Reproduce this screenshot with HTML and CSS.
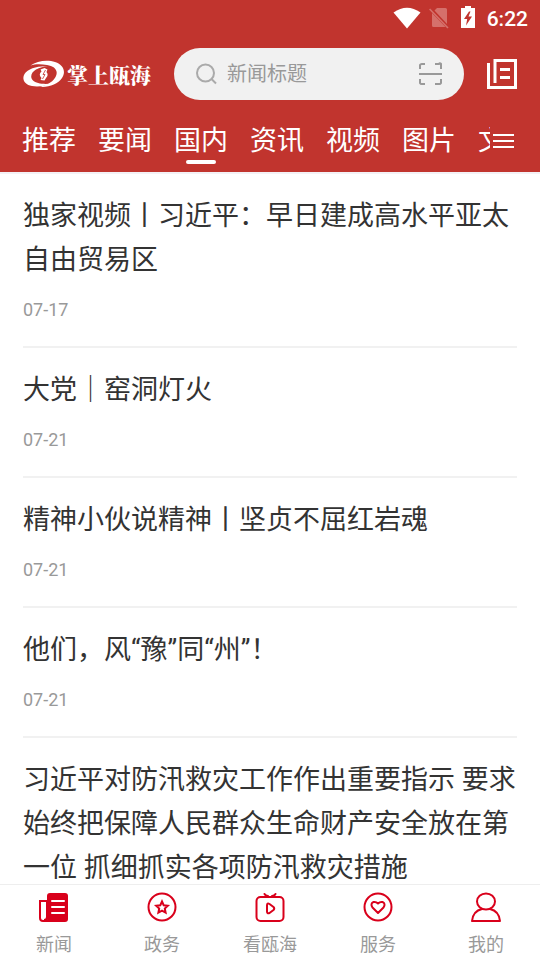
FILE: index.html
```html
<!DOCTYPE html>
<html lang="zh-CN">
<head>
<meta charset="utf-8">
<meta name="viewport" content="width=device-width, initial-scale=1">
<title>掌上瓯海</title>
<link rel="stylesheet" href="styles.css">
</head>
<body>
<header class="header">
  <div class="status">
    <svg width="28" height="24" viewBox="0 0 28 24" aria-hidden="true"><path fill="#fff" d="M.5 6.500Q14-3 27.500 6.500L14 22.500z"/></svg>
    <svg width="20" height="24" viewBox="0 0 20 24" aria-hidden="true"><path fill="#d5706b" d="M8 2h8.500a1.500 1.500 0 0 1 1.500 1.500v14.500L5.500 4.500zM3 7L16.500 21H4.500A1.500 1.500 0 0 1 3 19.500z"/><path stroke="#d5706b" stroke-width="1.600" d="M.6 3L19 22"/></svg>
    <svg width="14" height="24" viewBox="0 0 14 24" aria-hidden="true"><path fill="#fff" fill-rule="evenodd" d="M4 0h6v2h4v20H0V2h4zM8 5.500L3 13h3.200L5 19.500 11 10.500H7.500L9.500 5.500z"/></svg>
    <span class="clock">6:22</span>
  </div>
  <div class="topbar">
    <a class="brand" href="#">
      <svg width="42" height="28" viewBox="0 0 42 28" aria-hidden="true">
        <path fill="#fff" d="M7.500 5.500C14 .5 25-.5 32 2C41 5 43 12 39 18C35 24 26 27.500 17 26.800C25 25 31 21 33 16C35.500 10 31 6 24 5C18 4 12 4 7.500 5.500z"/>
        <path fill="#fff" d="M25 6.300C15 5.500 5 8.500 1.500 14C-1.500 19 1.500 24.500 9 26C15 27 23 26 28 23.500C21 24.500 13 23.500 10 20.500C6.500 17 8.500 12 13 9.500C16.500 7.500 21 6.500 25 6.300z"/>
        <path fill="#fff" d="M17.500 9.500L21.500 8L24.500 9.500L23.500 12Q26 15 23 18L21.500 20.500L17.500 20L18.500 18Q15 14.500 18.500 11.500z"/>
        <path fill="none" stroke="#c1342e" stroke-width=".8" d="M22.500 10L20 14.500h2L19.500 19"/>
      </svg>
      <span class="brand-name">掌上瓯海</span>
    </a>
    <form class="search" role="search">
      <svg width="22" height="22" viewBox="0 0 22 22" fill="none" stroke="#aaa" stroke-width="2" aria-hidden="true"><circle cx="9.500" cy="10" r="8.500"/><path d="M15.500 16l4.500 4.500"/></svg>
      <input class="search-input" type="search" aria-label="搜索新闻" placeholder="新闻标题">
      <button class="icon-button" type="button" aria-label="扫一扫">
        <svg width="24" height="24" viewBox="0 0 24 24" fill="none" stroke="#999" stroke-width="2" aria-hidden="true"><path d="M2 7V3a2 2 0 0 1 2-1h3M17 2h4a1 1 0 0 1 2 1v4M23 17v4a2 2 0 0 1-2 1h-4M7 22H4a2 2 0 0 1-2-1v-4M1 12h23"/></svg>
      </button>
    </form>
    <button class="icon-button" type="button" aria-label="数字报">
      <svg width="30" height="30" viewBox="0 0 30 30" fill="none" stroke="#fff" stroke-width="3" aria-hidden="true"><path d="M8 24V1.500h20.500v27h-27V4M13 10.500h10M13 18.500h10"/></svg>
    </button>
  </div>
  <div class="channels">
    <nav class="tabs" aria-label="频道">
      <a class="tab" href="#">推荐</a>
      <a class="tab" href="#">要闻</a>
      <a class="tab active" href="#" aria-current="page">国内</a>
      <a class="tab" href="#">资讯</a>
      <a class="tab" href="#">视频</a>
      <a class="tab" href="#">图片</a>
      <a class="tab" href="#">文化</a>
    </nav>
    <button class="icon-button more" type="button" aria-label="全部频道">
      <svg width="21" height="16" viewBox="0 0 21 16" stroke="#fff" stroke-width="2" aria-hidden="true"><path d="M0 2h21M0 8h21M0 14h21"/></svg>
    </button>
  </div>
</header>
<main class="feed">
  <article class="item"><a class="title" href="#">独家视频丨习近平：早日建成高水平亚太自由贸易区</a><time class="date">07-17</time></article>
  <article class="item"><a class="title" href="#">大党｜窑洞灯火</a><time class="date">07-21</time></article>
  <article class="item"><a class="title" href="#">精神小伙说精神丨坚贞不屈红岩魂</a><time class="date">07-21</time></article>
  <article class="item"><a class="title" href="#">他们，风“豫”同“州”！</a><time class="date">07-21</time></article>
  <article class="item"><a class="title" href="#">习近平对防汛救灾工作作出重要指示 要求始终把保障人民群众生命财产安全放在第一位 抓细抓实各项防汛救灾措施</a></article>
</main>
<nav class="bottom" aria-label="主导航">
  <a class="nav-link" href="#">
    <svg width="30" height="30" viewBox="0 0 30 30" aria-hidden="true"><rect x="8" y="1" width="21" height="29" rx="3" fill="#d9001b"/><path fill="none" stroke="#d9001b" stroke-width="2" d="M8 9H1v17a3 3 0 0 0 3 3h8M8 8v17a3 3 0 0 1-3 3"/><path stroke="#fff" stroke-width="2" stroke-linecap="round" d="M13 9h12M13 15h12M13 21h12"/></svg>
    <span>新闻</span></a>
  <a class="nav-link" href="#">
    <svg width="30" height="30" viewBox="0 0 30 30" fill="none" stroke="#d9001b" stroke-width="2" aria-hidden="true"><circle cx="15" cy="15" r="13.500"/><path d="M15 9.500l1.700 3.700 4.100.5-3 2.800.8 4.100-3.600-2-3.600 2 .8-4.100-3-2.800 4.100-.5z"/></svg>
    <span>政务</span></a>
  <a class="nav-link" href="#">
    <svg width="30" height="30" viewBox="0 0 30 30" fill="none" stroke="#d9001b" stroke-width="2" stroke-linecap="round" stroke-linejoin="round" aria-hidden="true"><rect x="1.500" y="5" width="27" height="24" rx="4"/><path d="M9.500 2Q10.500 4 13 4M20.500 2Q19.500 4 17 4M12 13.500Q12 10.500 14.500 12L18.500 15Q20 16.500 18.500 18L14.500 21Q12 22 12 19.500z"/></svg>
    <span>看瓯海</span></a>
  <a class="nav-link" href="#">
    <svg width="30" height="30" viewBox="0 0 30 30" fill="none" stroke="#d9001b" stroke-width="2" aria-hidden="true"><circle cx="15" cy="15" r="13.500"/><path stroke-linejoin="round" d="M15 11.500Q13 9.500 10.500 10Q7 11.500 9.500 15.500L15 21L20.500 15.500Q23 11.500 19.500 10Q17 9.500 15 11.500z"/></svg>
    <span>服务</span></a>
  <a class="nav-link" href="#">
    <svg width="30" height="30" viewBox="0 0 30 30" fill="none" stroke="#d9001b" stroke-width="2" stroke-linejoin="round" aria-hidden="true"><ellipse cx="15" cy="9.500" rx="9" ry="8"/><path d="M11 17Q2 19 1 29h28Q28 19 19 17"/></svg>
    <span>我的</span></a>
</nav>
</body>
</html>
```
FILE: styles.css
```css
* {
  box-sizing: border-box;
}

body {
  margin: 0;
  height: 100vh;
  display: flex;
  flex-direction: column;
  background: #fff;
  color: #333;
  font-family: Roboto, "Noto Sans CJK SC", sans-serif;
}

a {
  color: inherit;
  text-decoration: none;
}

svg {
  display: block;
  flex: none;
}

.header {
  flex: none;
  background: #c1342e;
  color: #fff;
  border-bottom: 2px solid #f3f1f5;
}

.status {
  display: flex;
  justify-content: flex-end;
  align-items: center;
  gap: 8px;
  height: 36px;
  padding-right: 12px;
}

.status svg:nth-child(3) {
  margin: 0 4px;
}

.clock {
  padding-top: 2px;
  font-size: 21px;
  font-weight: 500;
  line-height: 24px;
}

.topbar {
  display: flex;
  align-items: center;
  gap: 23px;
  padding: 12px 23px 0;
}

.brand {
  flex: none;
  display: flex;
  align-items: center;
  gap: 2px;
}

.brand-name {
  font-family: "Noto Serif CJK SC", "Noto Sans CJK SC", serif;
  font-size: 21px;
  font-weight: 900;
  line-height: 28px;
}

.search {
  flex: 1;
  min-width: 0;
  height: 52px;
  display: flex;
  align-items: center;
  gap: 9px;
  padding: 0 22px;
  border-radius: 26px;
  background: #f1f1f1;
}

.search-input {
  flex: 1;
  min-width: 0;
  padding: 0;
  border: 0;
  outline: 0;
  background: none;
  color: #333;
  font: 20px/28px Roboto, "Noto Sans CJK SC", sans-serif;
}

.search-input::placeholder {
  color: #999;
}

.icon-button {
  flex: none;
  padding: 0;
  border: 0;
  background: none;
}

.channels {
  display: flex;
  align-items: center;
  height: 72px;
  padding: 0 26px 0 22px;
}

.tabs {
  flex: 1;
  min-width: 0;
  display: flex;
  gap: 22px;
  overflow: hidden;
}

.tab {
  flex: none;
  display: flex;
  flex-direction: column;
  align-items: center;
  height: 56px;
  padding-top: 12px;
  font-size: 27px;
  line-height: 42px;
}

.active::after {
  content: "";
  width: 30px;
  height: 4px;
  margin-top: -2px;
  border-radius: 2px;
  background: #fff;
}

.more {
  margin: 10px 0 0 3px;
}

.feed {
  flex: 1;
  min-height: 0;
  overflow: hidden;
  padding: 0 23px;
}

.item {
  padding: 20px 0 24px;
  border-bottom: 2px solid #f1f1f1;
}

.title {
  display: block;
  font-size: 27px;
  line-height: 44px;
}

.date {
  display: block;
  margin-top: 16px;
  color: #999;
  font-size: 18px;
  line-height: 24px;
}

.bottom {
  flex: none;
  display: flex;
  height: 76px;
  border-top: 1px solid #eee;
  background: #fff;
}

.nav-link {
  flex: 1;
  display: flex;
  flex-direction: column;
  align-items: center;
  gap: 10px;
  padding-top: 7px;
  color: #999;
  font-size: 18px;
  line-height: 26px;
}
```
